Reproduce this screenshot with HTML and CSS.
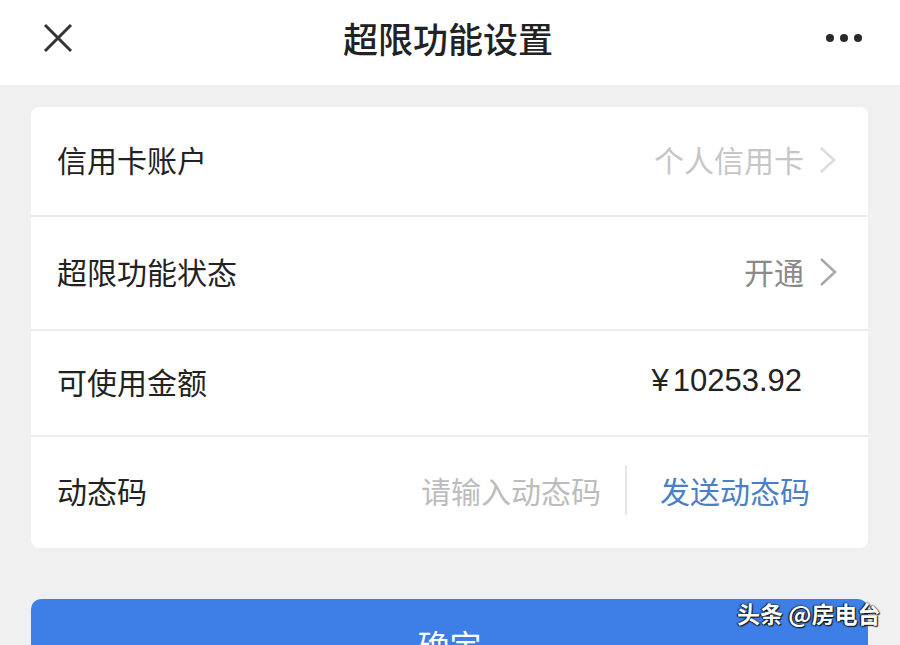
FILE: index.html
```html
<!DOCTYPE html>
<html>
    <head>
        <meta charset="utf-8">
        <meta name="viewport" content="width=900">
        <link rel="stylesheet" href="styles.css">
    </head>
    <body>
        <div class="topbar">
            <span class="topbar-btn">
                <svg class="icon-close" width="32" height="32" viewBox="0 0 32 32">
                    <path d="M3 3 L29 29 M29 3 L3 29" stroke="#333" stroke-width="3" fill="none"/>
                </svg>
            </span>
            <div class="topbar-title">超限功能设置</div>
            <span class="topbar-btn topbar-more">
                <i class="dot"></i><i class="dot"></i><i class="dot"></i>
            </span>
        </div>

        <div class="page">
            <div class="card">
                <div class="row">
                    <div class="row-label">信用卡账户</div>
                    <div class="row-val val-light">个人信用卡</div>
                    <svg class="chev" width="20" height="28" viewBox="0 0 20 28">
                        <path d="M3 2 L16 14 L3 26" stroke="#dcdcdc" stroke-width="2.5" fill="none"/>
                    </svg>
                </div>
                <div class="row row-tall">
                    <div class="row-label">超限功能状态</div>
                    <div class="row-val val-mid">开通</div>
                    <svg class="chev" width="20" height="30" viewBox="0 0 20 30">
                        <path d="M3 2 L17 15 L3 28" stroke="#a8a8a8" stroke-width="2.5" fill="none"/>
                    </svg>
                </div>
                <div class="row row-short">
                    <div class="row-label">可使用金额</div>
                    <div class="row-val amount"><span class="yen">¥</span>10253.92</div>
                </div>
                <div class="row">
                    <div class="row-label">动态码</div>
                    <div class="row-val val-placeholder">请输入动态码</div>
                    <div class="vsep"></div>
                    <a class="send-code" href="#">发送动态码</a>
                </div>
            </div>

            <a class="confirm" href="#">确定</a>
        </div>

        <div class="watermark">头条 @房电台</div>
    </body>
</html>
```

FILE: styles.css
```css
html {
    box-sizing: border-box;
}
*, *:before, *:after {
    box-sizing: inherit;
}

body {
    margin: 0;
    height: 645px;
    overflow: hidden;
    background-color: #f0f0f0;
    color: #222;
    font-family: "Noto Sans CJK SC", "Noto Sans", sans-serif;
}

.topbar {
    height: 85px;
    background-color: white;
    display: flex;
    align-items: center;
    justify-content: space-between;
    padding: 0 42px 10px 42px;
}

.topbar-btn {
    width: 32px;
    display: flex;
    align-items: center;
}

.topbar-title {
    font-size: 35px;
    font-weight: 500;
    color: #222;
    margin-left: -4px;
}

.topbar-more {
    gap: 6px;
    width: auto;
    margin-right: -4px;
}

.dot {
    display: block;
    width: 8px;
    height: 8px;
    border-radius: 50%;
    background-color: #2a2a2a;
}

.page {
    padding: 22px 32px 0 31px;
}

.card {
    background-color: white;
    border-radius: 8px;
    overflow: hidden;
}

.row {
    height: 110px;
    display: flex;
    align-items: center;
    padding: 0 30px 5px 26px;
    border-bottom: 2px solid #ececec;
    font-size: 30px;
}
.row-tall {
    height: 114px;
}
.row-short {
    height: 106px;
}
.row:last-child {
    border-bottom: none;
    height: 111px;
}

.row-label {
    flex: 1;
    color: #222;
}

.row-val {
    white-space: nowrap;
}

.val-light {
    color: #c6c6c6;
}

.val-mid {
    color: #8a8a8a;
}

.chev {
    margin-left: 14px;
    margin-top: 2px;
}

.amount {
    font-family: "Liberation Sans", Arial, sans-serif;
    font-size: 31px;
    color: #222;
    margin-right: 36px;
}

.yen {
    margin-right: 4px;
}

.val-placeholder {
    color: #bcbcbc;
}

.vsep {
    width: 2px;
    height: 50px;
    background-color: #e6e6e6;
    margin: 0 33px 0 24px;
}

.send-code {
    color: #4a7ec6;
    text-decoration: none;
    margin-right: 28px;
}

.confirm {
    display: block;
    margin-top: 51px;
    height: 90px;
    line-height: 90px;
    border-radius: 10px;
    background-color: #3d7fe7;
    color: white;
    text-align: center;
    text-decoration: none;
    font-size: 32px;
}

.watermark {
    position: absolute;
    top: 596px;
    left: 737px;
    font-size: 23px;
    font-weight: 700;
    color: white;
    white-space: nowrap;
    text-shadow: 0 0 2px #111, 1px 1px 1px #111, -1px 0 1px #111;
}
```
